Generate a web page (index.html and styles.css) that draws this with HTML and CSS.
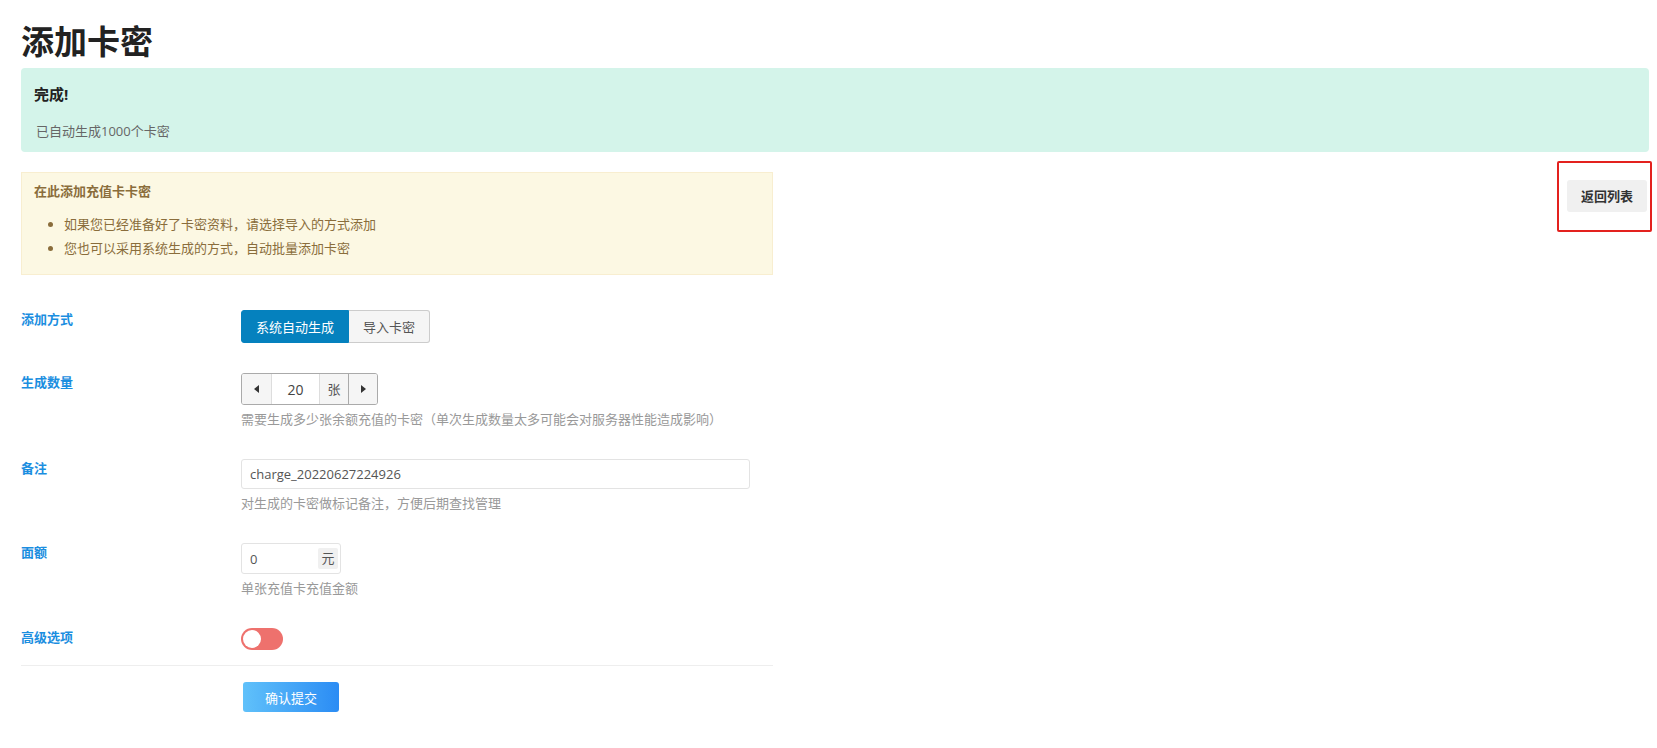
FILE: index.html
```html
<!DOCTYPE html>
<html lang="zh-CN">
  <head>
    <meta charset="UTF-8" />
    <meta name="viewport" content="width=device-width, initial-scale=1.0" />
    <title>添加卡密</title>
    <link rel="stylesheet" href="styles.css">
  </head>
  <body>
    <div class="page">
      <h1 class="page-title">添加卡密</h1>

      <div class="alert-success">
        <h4>完成!</h4>
        <p>已自动生成1000个卡密</p>
      </div>

      <div class="top-row">
        <div class="notice">
          <div class="notice-title">在此添加充值卡卡密</div>
          <ul>
            <li>如果您已经准备好了卡密资料，请选择导入的方式添加</li>
            <li>您也可以采用系统生成的方式，自动批量添加卡密</li>
          </ul>
        </div>
        <div class="toolbar">
          <a class="btn-back" href="#">返回列表</a>
          <span class="mark"></span>
        </div>
      </div>

      <form class="card-form" onsubmit="return false">
        <div class="form-row">
          <label class="form-label">添加方式</label>
          <div class="form-field">
            <div class="btn-group">
              <button type="button" class="btn-seg active">系统自动生成</button>
              <button type="button" class="btn-seg">导入卡密</button>
            </div>
          </div>
        </div>

        <div class="form-row">
          <label class="form-label">生成数量</label>
          <div class="form-field">
            <div class="spinner">
              <button type="button" class="spin-btn"><i class="tri tri-left"></i></button>
              <input class="spin-input" type="text" value="20" />
              <span class="spin-unit">张</span>
              <button type="button" class="spin-btn"><i class="tri tri-right"></i></button>
            </div>
            <div class="help">需要生成多少张余额充值的卡密（单次生成数量太多可能会对服务器性能造成影响）</div>
          </div>
        </div>

        <div class="form-row">
          <label class="form-label">备注</label>
          <div class="form-field">
            <input class="text-input" type="text" value="charge_20220627224926" />
            <div class="help">对生成的卡密做标记备注，方便后期查找管理</div>
          </div>
        </div>

        <div class="form-row">
          <label class="form-label">面额</label>
          <div class="form-field">
            <div class="money-input">
              <input type="text" value="0" />
              <span class="unit">元</span>
            </div>
            <div class="help">单张充值卡充值金额</div>
          </div>
        </div>

        <div class="form-row last">
          <label class="form-label">高级选项</label>
          <div class="form-field">
            <span class="switch"><span class="knob"></span></span>
          </div>
        </div>

        <div class="form-actions">
          <button type="submit" class="btn-submit">确认提交</button>
        </div>
      </form>
    </div>
  </body>
</html>
```

FILE: styles.css
```css
body {
  margin: 0;
  font-family: "Open Sans", "Noto Sans CJK SC", sans-serif;
  font-size: 13px;
  color: #333;
  background-color: #fff;
}
.page {
  padding: 23px 8px 30px 21px;
}
.page-title {
  margin: 0 0 7px;
  font-size: 33px;
  line-height: 38px;
  font-weight: bold;
  color: #222;
}

/* green result box */
.alert-success {
  background-color: #d4f4ea;
  border-radius: 4px;
  padding: 15px 13px 11px;
}
.alert-success h4 {
  margin: 0 0 16px;
  font-size: 15px;
  line-height: 22px;
  color: #222;
}
.alert-success p {
  margin: 0 0 0 2px;
  line-height: 20px;
  color: #666;
}

.top-row {
  display: flex;
  justify-content: space-between;
  align-items: flex-start;
  margin-top: 20px;
}
.notice {
  width: 726px;
  background-color: #fcf8e3;
  border: 1px solid #f8eed0;
  padding: 8px 12px 14px;
  color: #8a6d3b;
}
.notice-title {
  font-weight: bold;
  line-height: 20px;
}
.notice ul {
  margin: 11px 0 0;
  padding-left: 30px;
}
.notice li {
  line-height: 24px;
}

.toolbar {
  position: relative;
  margin: 8px 2px 0 0;
}
.btn-back {
  display: block;
  width: 80px;
  height: 32px;
  line-height: 32px;
  text-align: center;
  background-color: #f0f0f0;
  border-radius: 3px;
  font-weight: bold;
  color: #333;
  text-decoration: none;
}
.mark {
  position: absolute;
  top: -19px;
  left: -10px;
  right: -5px;
  bottom: -20px;
  border: 2px solid #e3211e;
  border-radius: 2px;
}

/* form */
.card-form {
  width: 752px;
  margin-top: 35px;
}
.form-row {
  display: flex;
  margin-bottom: 30px;
}
.form-row.last {
  margin-bottom: 0;
  padding-bottom: 15px;
  border-bottom: 1px solid #eee;
}
.form-label {
  width: 220px;
  flex-shrink: 0;
  line-height: 18px;
  font-weight: bold;
  color: #1b8ee0;
}
.form-field {
  flex: 1;
}
.help {
  margin-top: 4px;
  line-height: 20px;
  color: #999;
}

.btn-group {
  display: flex;
}
.btn-seg {
  height: 33px;
  padding: 0 14px;
  font-family: inherit;
  font-size: 13px;
  white-space: nowrap;
  color: #555;
  background-color: #f5f5f5;
  border: 1px solid #ccc;
  cursor: pointer;
}
.btn-seg:first-child {
  border-radius: 3px 0 0 3px;
}
.btn-seg:last-child {
  border-radius: 0 3px 3px 0;
  border-left: none;
}
.btn-seg.active {
  background-color: #0581be;
  border-color: #0581be;
  color: #fff;
}

.spinner {
  display: inline-flex;
  height: 30px;
  border: 1px solid #aaa;
  border-radius: 3px;
  overflow: hidden;
}
.spin-btn {
  width: 29px;
  padding: 0;
  background-color: #f5f5f5;
  border: none;
  display: flex;
  align-items: center;
  justify-content: center;
}
.spin-btn:last-child {
  border-left: 1px solid #aaa;
}
.spin-input {
  width: 47px;
  border: none;
  border-left: 1px solid #ddd;
  text-align: center;
  font-family: inherit;
  font-size: 14px;
  color: #444;
  padding: 0;
}
.spin-unit {
  width: 28px;
  line-height: 30px;
  text-align: center;
  background-color: #f5f5f5;
  border-left: 1px solid #ddd;
  color: #555;
}
.tri {
  width: 0;
  height: 0;
  border-top: 4px solid transparent;
  border-bottom: 4px solid transparent;
}
.tri-left {
  border-right: 5px solid #333;
}
.tri-right {
  border-left: 5px solid #333;
}

.text-input {
  display: block;
  box-sizing: border-box;
  width: 509px;
  height: 30px;
  padding: 0 8px;
  border: 1px solid #e3e3e3;
  border-radius: 3px;
  font-family: inherit;
  font-size: 13px;
  color: #555;
}

.money-input {
  display: flex;
  align-items: center;
  box-sizing: border-box;
  width: 100px;
  height: 31px;
  border: 1px solid #e3e3e3;
  border-radius: 3px;
}
.money-input input {
  width: 60px;
  border: none;
  padding: 0 8px;
  font-family: inherit;
  font-size: 13px;
  color: #555;
  outline: none;
}
.money-input .unit {
  margin-left: auto;
  margin-right: 2px;
  width: 25px;
  height: 21px;
  line-height: 21px;
  text-align: center;
  background-color: #f0f0f0;
  border-radius: 2px;
  color: #555;
}

.switch {
  display: block;
  position: relative;
  width: 42px;
  height: 22px;
  border-radius: 11px;
  background-color: #ee716d;
}
.knob {
  position: absolute;
  top: 2px;
  left: 2px;
  width: 18px;
  height: 18px;
  border-radius: 50%;
  background-color: #fff;
}

.form-actions {
  padding: 16px 0 0 222px;
}
.btn-submit {
  width: 96px;
  height: 30px;
  border: none;
  border-radius: 3px;
  background: linear-gradient(90deg, #60c1fa, #2b8cf4);
  color: #fff;
  font-family: inherit;
  font-size: 13px;
  cursor: pointer;
}
```
